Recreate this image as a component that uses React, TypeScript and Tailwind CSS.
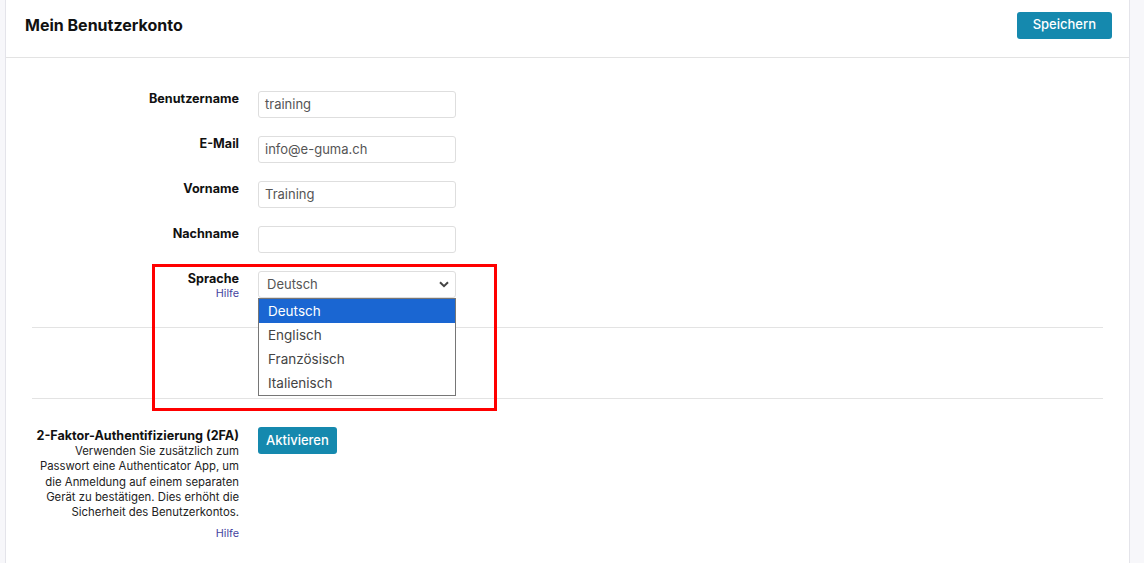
import { ReactNode } from 'react';

const font = { fontFamily: 'Inter, "Noto Sans", "Liberation Sans", sans-serif' };

function Row({ label, hint, children }: { label: string; hint?: string; children: ReactNode }) {
  return (
    <div className="flex gap-[19px] mb-[18px]">
      <div className="w-[207px] shrink-0 text-right">
        <div className="text-[12.6px] leading-[15px] font-bold text-[#111]">{label}</div>
        {hint && <div className="text-[10.8px] leading-[16px] text-[#4545a0]">{hint}</div>}
      </div>
      {children}
    </div>
  );
}

function TextInput({ value }: { value: string }) {
  return (
    <div className="w-[198px] h-[27px] border border-[#dedede] rounded-[3px] px-[6px] flex items-center text-[13px] text-[#555]">
      {value}
    </div>
  );
}

export default function App() {
  const languages = ['Deutsch', 'Englisch', 'Französisch', 'Italienisch'];

  return (
    <div className="flex h-[563px] bg-[#f7f7fa] overflow-hidden" style={font}>
      <div className="w-[6px] shrink-0 border-r border-[#e4e4ea]" />
      <div className="flex-1 bg-white flex flex-col">
        {/* Header */}
        <div className="h-[58px] shrink-0 border-b border-[#e3e3e3] flex items-center justify-between pl-[19px] pr-[17px]">
          <h1 className="text-[16px] font-bold text-[#111] -mt-[8px]">Mein Benutzerkonto</h1>
          <button className="h-[27px] px-[16px] rounded-[3px] bg-[#1589ae] text-white text-[13px] font-medium -mt-[7px]">
            Speichern
          </button>
        </div>

        {/* Form */}
        <div className="relative px-[26px] pt-[33px]">
          <Row label="Benutzername">
            <TextInput value="training" />
          </Row>
          <Row label="E-Mail">
            <TextInput value="info@e-guma.ch" />
          </Row>
          <Row label="Vorname">
            <TextInput value="Training" />
          </Row>
          <Row label="Nachname">
            <TextInput value="" />
          </Row>
          <Row label="Sprache" hint="Hilfe">
            <div className="relative">
              <div className="w-[198px] h-[27px] border border-[#dedede] rounded-[3px] pl-[8px] pr-[6px] flex items-center justify-between text-[13px] text-[#555]">
                <span>Deutsch</span>
                <svg width="10" height="7" viewBox="0 0 10 7" fill="none">
                  <path d="M1 1.2l4 4 4-4" stroke="#444" strokeWidth="2" />
                </svg>
              </div>
              {/* open dropdown */}
              <div className="absolute left-0 top-[27px] w-[198px] border border-[#767676] bg-white z-10">
                {languages.map((l, i) => (
                  <div
                    key={l}
                    className={`h-[24px] flex items-center pl-[9px] text-[13.5px] ${
                      i === 0 ? 'bg-[#1a66d2] text-white' : 'text-[#444]'
                    }`}
                  >
                    {l}
                  </div>
                ))}
              </div>
            </div>
          </Row>

          <div className="border-t border-[#e3e3e3] mt-[25px] h-[71px]" />
          <div className="border-t border-[#e3e3e3] pt-[28px]">
            <div className="flex gap-[19px]">
              <div className="w-[207px] shrink-0 text-right whitespace-nowrap">
                <div className="text-[12.6px] leading-[16px] font-bold text-[#111] pt-[1px]">2-Faktor-Authentifizierung (2FA)</div>
                <p className="text-[11.35px] leading-[15.3px] text-[#222]">
                  Verwenden Sie zusätzlich zum
                  <br />
                  Passwort eine Authenticator App, um
                  <br />
                  die Anmeldung auf einem separaten
                  <br />
                  Gerät zu bestätigen. Dies erhöht die
                  <br />
                  Sicherheit des Benutzerkontos.
                </p>
                <div className="text-[10.8px] leading-[16px] text-[#4545a0] mt-[6px]">Hilfe</div>
              </div>
              <button className="h-[27px] px-[8px] rounded-[3px] bg-[#1589ae] text-white text-[13px] font-medium">
                Aktivieren
              </button>
            </div>
          </div>

          {/* annotation */}
          <div className="absolute left-[146px] top-[206px] w-[345px] h-[147px] border-[3px] border-[#ff0000] pointer-events-none" />
        </div>
      </div>
      <div className="w-[15px] shrink-0 border-l border-[#e4e4ea]" />
    </div>
  );
}
